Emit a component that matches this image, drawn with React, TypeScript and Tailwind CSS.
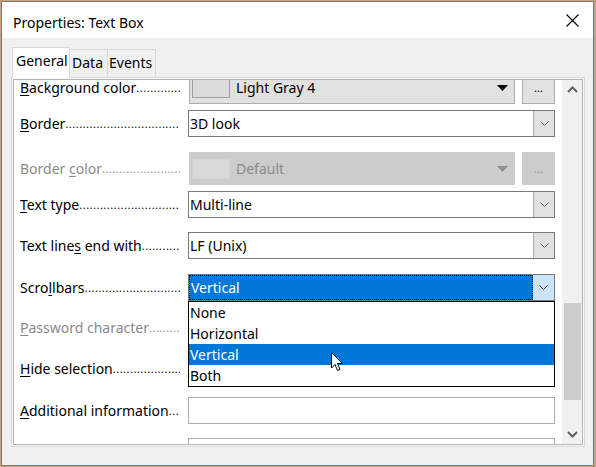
import React from "react";

const Chevron = ({ up = false, color = "#606060" }: { up?: boolean; color?: string }) => (
  <svg width="9" height="5" viewBox="0 0 9 5" className={up ? "rotate-180" : ""}>
    <path d="M0.5 0.5 L4.5 4.5 L8.5 0.5" fill="none" stroke={color} strokeWidth="1" />
  </svg>
);

const BoldChevron = ({ up = false }: { up?: boolean }) => (
  <svg width="11" height="7" viewBox="0 0 11 7" className={up ? "rotate-180" : ""}>
    <path d="M1 1 L5.5 5.5 L10 1" fill="none" stroke="#606060" strokeWidth="2" />
  </svg>
);

const DOTS = ".".repeat(80);

const Label = ({
  pre,
  u,
  post,
  disabled = false,
}: {
  pre: string;
  u: string;
  post: string;
  disabled?: boolean;
}) => (
  <div
    className={
      "w-[166px] shrink-0 pl-[6px] flex whitespace-nowrap overflow-hidden " +
      (disabled ? "text-[#8a8a8a]" : "text-black")
    }
  >
    <span>
      {pre}
      <span className="underline underline-offset-2">{u}</span>
      {post}
    </span>
    <span className="overflow-hidden text-[11px] leading-[20px] self-end tracking-[0.5px]">{DOTS}</span>
  </div>
);

const ListBox = ({ value }: { value: string }) => (
  <div className="ml-[8px] w-[367px] h-[27px] border border-[#7a7a7a] bg-white flex items-center">
    <span className="flex-1 pl-[1px]">{value}</span>
    <div className="w-[21px] h-full bg-[#e1e1e1] border-l border-[#adadad] flex items-center justify-center">
      <Chevron />
    </div>
  </div>
);

const ColorBox = ({ value, disabled = false }: { value: string; disabled?: boolean }) => (
  <div className="ml-[9px] flex gap-[7px] h-full">
    <div
      className={
        "w-[326px] h-full border flex items-center " +
        (disabled ? "bg-[#cccccc] border-[#cccccc]" : "bg-[#e1e1e1] border-[#adadad]")
      }
    >
      <div
        className={
          "ml-[2px] w-[38px] h-[20px] border " +
          (disabled ? "bg-[#dadada] border-[#d4d4d4]" : "bg-[#dcdcdc] border-[#a0a0a0]")
        }
      />
      <span className={"ml-[6px] flex-1 " + (disabled ? "text-[#8a8a8a]" : "text-black")}>{value}</span>
      <svg width="11" height="6" viewBox="0 0 11 6" className="mr-[6px]">
        <path d="M0 0 L11 0 L5.5 6 Z" fill={disabled ? "#8f8f8f" : "#000"} />
      </svg>
    </div>
    <div
      className={
        "w-[33px] h-full border flex items-center justify-center text-[11px] " +
        (disabled ? "bg-[#cccccc] border-[#cccccc] text-[#8a8a8a]" : "bg-[#e1e1e1] border-[#adadad] text-black")
      }
    >
      ...
    </div>
  </div>
);

const Cursor = () => (
  <svg width="13" height="20" viewBox="0 0 13 20">
    <path
      d="M0.5 0.5 L0.5 16 L4 12.5 L6.5 18.5 L9 17.5 L6.5 11.5 L11.5 11.5 Z"
      fill="#fff"
      stroke="#000"
      strokeWidth="1"
      strokeLinejoin="miter"
    />
  </svg>
);

export default function App() {
  return (
    <div className="w-[596px] h-[467px] bg-[#c9a27c] font-['Noto_Sans',sans-serif] text-[14px] leading-[20px] overflow-hidden">
      <div className="ml-[1px] mt-[1px] w-[593px] h-[465px] border border-[#7a7a7a] bg-[#f0f0f0] flex flex-col">
        {/* title bar */}
        <div className="h-[36px] bg-white flex items-start justify-between pl-[11px] pr-[14px] shrink-0">
          <span className="mt-[11px] text-[14px] text-black">Properties: Text Box</span>
          <svg width="13" height="13" viewBox="0 0 13 13" className="mt-[12px]">
            <path d="M0.5 0.5 L12.5 12.5 M12.5 0.5 L0.5 12.5" stroke="#000" strokeWidth="1.1" />
          </svg>
        </div>

        {/* tabs */}
        <div className="pl-[10px] flex items-end h-[39px] shrink-0">
          <div className="h-[31px] w-[58px] bg-white border border-b-0 border-[#d9d9d9] pl-[3px] pt-[3px] text-black relative z-10 -mb-[1px]">
            General
          </div>
          <div className="h-[28px] w-[38px] border-t border-r border-[#d9d9d9] pl-[2px] pt-[3px]">Data</div>
          <div className="h-[28px] w-[48px] border-t border-r border-[#d9d9d9] pl-[1px] pt-[3px]">Events</div>
        </div>

        {/* tab page */}
        <div className="ml-[9px] w-[574px] h-[370px] border border-[#d9d9d9] p-[1px] bg-[#f7f7f7]">
          <div className="w-full h-full border border-[#b4b4b4] bg-white flex overflow-hidden">
            <div className="relative flex-1 h-full overflow-hidden">
              <div className="-mt-[9px] flex flex-col">
                <div className="flex items-center h-[33px]">
                  <Label pre="" u="B" post="ackground color" />
                  <ColorBox value="Light Gray 4" />
                </div>
                <div className="flex items-center h-[27px] mt-[6px]">
                  <Label pre="" u="B" post="order" />
                  <ListBox value="3D look" />
                </div>
                <div className="flex items-center h-[33px] mt-[15px]">
                  <Label pre="Border " u="c" post="olor" disabled />
                  <ColorBox value="Default" disabled />
                </div>
                <div className="flex items-center h-[27px] mt-[6px]">
                  <Label pre="" u="T" post="ext type" />
                  <ListBox value="Multi-line" />
                </div>
                <div className="flex items-center h-[27px] mt-[14px]">
                  <Label pre="Text line" u="s" post=" end with" />
                  <ListBox value="LF (Unix)" />
                </div>
                <div className="flex items-center h-[27px] mt-[15px]">
                  <Label pre="Scro" u="l" post="lbars" />
                  <div className="ml-[8px] w-[367px] h-[27px] border border-[#7a7a7a] bg-[#0078d7] flex items-center">
                    <div className="flex-1 h-full border border-dotted border-black flex items-center text-white pl-[1px]">
                      Vertical
                    </div>
                    <div className="w-[21px] h-full bg-[#cce4f7] flex items-center justify-center">
                      <Chevron color="#404040" />
                    </div>
                  </div>
                </div>
                <div className="flex items-center h-[27px] mt-[13px]">
                  <Label pre="" u="P" post="assword character" disabled />
                  <div className="ml-[8px] w-[367px] h-[27px] border border-[#adadad] bg-white" />
                </div>
                <div className="flex items-center h-[27px] mt-[14px]">
                  <Label pre="" u="H" post="ide selection" />
                  <div className="ml-[8px] w-[367px] h-[27px] border border-[#7a7a7a] bg-white" />
                </div>
                <div className="flex items-center h-[27px] mt-[15px]">
                  <Label pre="" u="A" post="dditional information" />
                  <div className="ml-[8px] w-[367px] h-[27px] border border-[#adadad] bg-white" />
                </div>
                <div className="flex items-center h-[27px] mt-[14px]">
                  <Label pre="" u="H" post="elp text" />
                  <div className="ml-[8px] w-[367px] h-[27px] border border-[#adadad] bg-white" />
                </div>
              </div>

              {/* open dropdown list */}
              <div className="absolute left-[174px] top-[221px] w-[367px] h-[86px] border border-black bg-white flex flex-col z-20">
                <div className="h-[21px] pl-[1px] flex items-center">None</div>
                <div className="h-[21px] pl-[1px] flex items-center">Horizontal</div>
                <div className="h-[21px] pl-[1px] flex items-center bg-[#0078d7] text-white">Vertical</div>
                <div className="h-[21px] pl-[1px] flex items-center">Both</div>
              </div>
              <div className="absolute z-30 left-[317px] top-[272px]">
                <Cursor />
              </div>
            </div>

            {/* scrollbar */}
            <div className="w-[20px] h-full bg-[#f0f0f0] flex flex-col items-center">
              <div className="h-[17px] mt-[1px] flex items-center justify-center">
                <BoldChevron up />
              </div>
              <div className="mt-[205px] w-[17px] h-[97px] bg-[#cdcdcd]" />
              <div className="flex-1" />
              <div className="h-[17px] mb-[1px] flex items-center justify-center">
                <BoldChevron />
              </div>
            </div>
          </div>
        </div>
      </div>
    </div>
  );
}
